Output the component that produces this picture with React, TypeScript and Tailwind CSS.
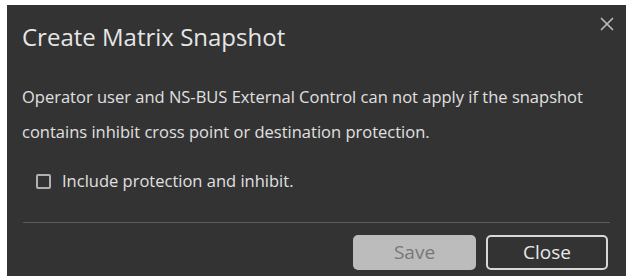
import { X } from "lucide-react";

export default function App() {
  return (
    <div className="w-[626px] h-[276px] bg-white pl-[7px] pt-[5px] overflow-hidden font-['Open_Sans',sans-serif]">
      <div className="w-[619px] h-[271px] bg-[#333333] flex flex-col">
        {/* Header */}
        <div className="flex items-start justify-between h-[74px]">
          <h2 className="pl-[15px] pt-[16px] text-[24px] leading-[32px] text-[#e6e6e6]">
            Create Matrix Snapshot
          </h2>
          <button className="mt-[8px] mr-[8px] text-[#bdbdbd]">
            <X size={22} strokeWidth={1.8} />
          </button>
        </div>

        {/* Body */}
        <div className="px-[15px] text-[16.5px] leading-[35px] text-[#e0e0e0]">
          <p>
            Operator user and NS-BUS External Control can not apply if the snapshot
            <br />
            contains inhibit cross point or destination protection.
          </p>
        </div>

        <label className="flex items-center gap-[11px] pl-[29px] mt-[20px] text-[16.5px] text-[#e0e0e0]">
          <span className="w-[15px] h-[15px] border-2 border-[#b0b0b0] rounded-[2px]" />
          Include protection and inhibit.
        </label>

        <div className="mx-[16px] mt-[28px] h-px bg-[#5a5a5a]" />

        <div className="flex justify-end gap-[10px] pr-[18px] mt-[12px]">
          <button className="w-[123px] h-[35px] rounded-[5px] bg-[#bcbcbc] text-[#777777] text-[19px]">
            Save
          </button>
          <button className="w-[122px] h-[35px] rounded-[5px] border-2 border-[#d8d8d8] text-[#e8e8e8] text-[19px]">
            Close
          </button>
        </div>
      </div>
    </div>
  );
}
